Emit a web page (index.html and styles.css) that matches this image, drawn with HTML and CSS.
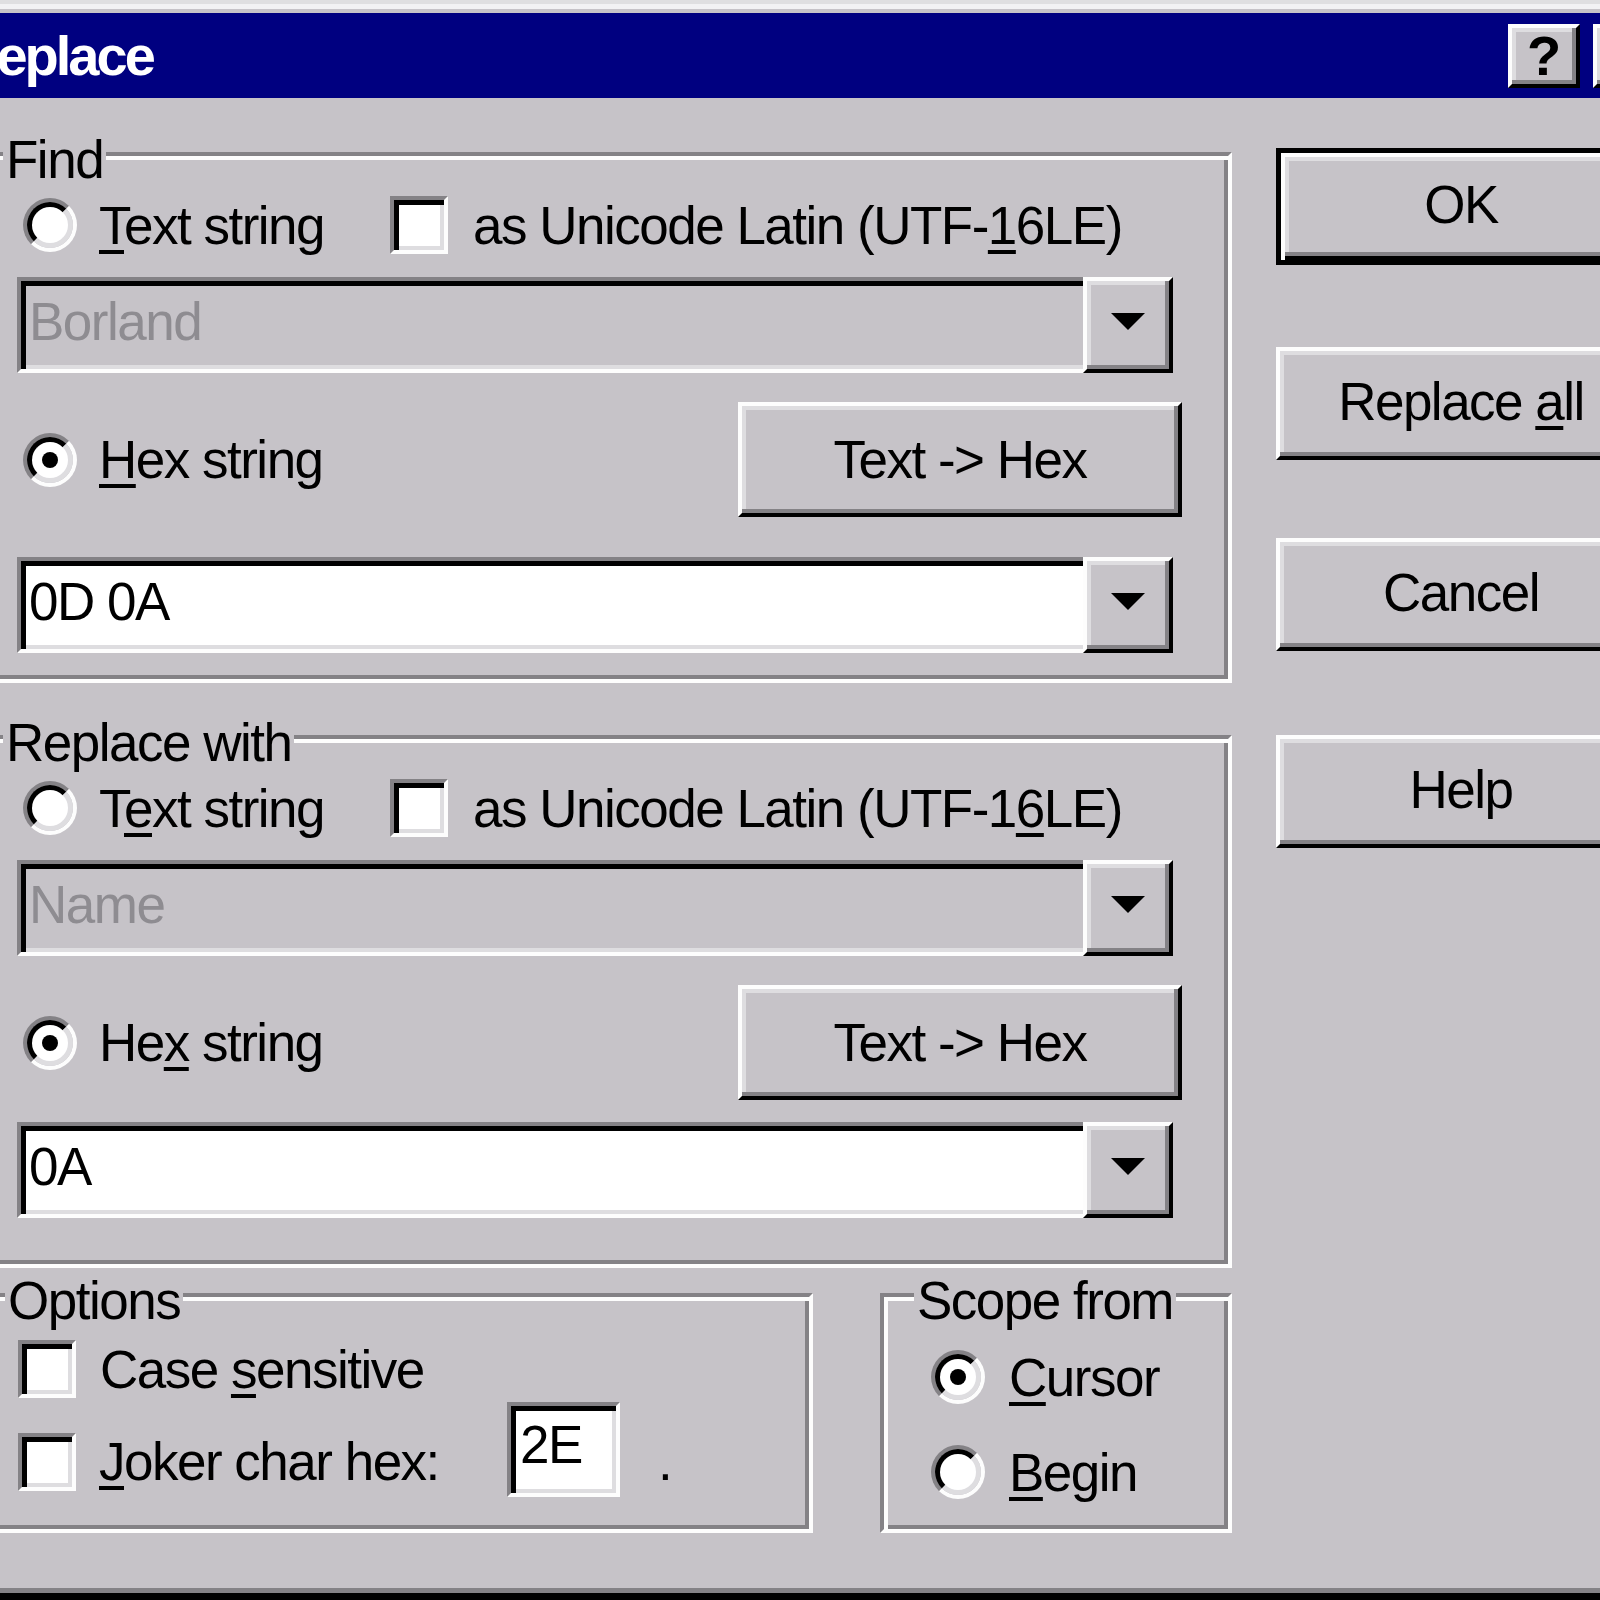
FILE: index.html
```html
<!DOCTYPE html>
<html>
<head>
<meta charset="utf-8">
<title>Replace</title>
<link rel="stylesheet" href="styles.css">
</head>
<body>
<div class="window">
  <div class="frame-top"></div>
  <div class="titlebar">
    <span class="title">Replace</span>
    <div class="caption-btns">
      <span class="cap-btn">?</span>
      <span class="cap-btn close"></span>
    </div>
  </div>
  <div class="client">
    <div class="left-col">
      <section class="group find">
        <div class="legend">Find</div>
        <div class="row">
          <span class="radio"><span class="radio-in"></span></span>
          <span class="lbl r-lbl"><u>T</u>ext string</span>
          <span class="check"></span>
          <span class="lbl c-lbl">as Unicode Latin (UTF-<u>1</u>6LE)</span>
        </div>
        <div class="combo">
          <div class="field disabled">Borland</div>
          <div class="drop"><svg width="34" height="17" viewBox="0 0 34 17"><polygon points="0,0 34,0 17,17" fill="#000"/></svg></div>
        </div>
        <div class="row hexrow">
          <span class="radio on"><span class="radio-in"></span></span>
          <span class="lbl r-lbl grow"><u>H</u>ex string</span>
          <span class="btn t2h"><span>Text -&gt; Hex</span></span>
        </div>
        <div class="combo combo-lg">
          <div class="field">0D 0A</div>
          <div class="drop"><svg width="34" height="17" viewBox="0 0 34 17"><polygon points="0,0 34,0 17,17" fill="#000"/></svg></div>
        </div>
      </section>

      <section class="group replace">
        <div class="legend">Replace with</div>
        <div class="row">
          <span class="radio"><span class="radio-in"></span></span>
          <span class="lbl r-lbl">T<u>e</u>xt string</span>
          <span class="check"></span>
          <span class="lbl c-lbl">as Unicode Latin (UTF-1<u>6</u>LE)</span>
        </div>
        <div class="combo">
          <div class="field disabled">Name</div>
          <div class="drop"><svg width="34" height="17" viewBox="0 0 34 17"><polygon points="0,0 34,0 17,17" fill="#000"/></svg></div>
        </div>
        <div class="row hexrow">
          <span class="radio on"><span class="radio-in"></span></span>
          <span class="lbl r-lbl grow">He<u>x</u> string</span>
          <span class="btn t2h"><span>Text -&gt; Hex</span></span>
        </div>
        <div class="combo">
          <div class="field">0A</div>
          <div class="drop"><svg width="34" height="17" viewBox="0 0 34 17"><polygon points="0,0 34,0 17,17" fill="#000"/></svg></div>
        </div>
      </section>

      <div class="bottom-row">
        <section class="group options">
          <div class="legend">Options</div>
          <div class="cs-row">
            <span class="check"></span>
            <span class="lbl cs-lbl">Case <u>s</u>ensitive</span>
          </div>
          <div class="jk-row">
            <span class="check"></span>
            <span class="lbl jk-lbl"><u>J</u>oker char hex:</span>
            <span class="edit">2E</span>
            <span class="lbl dot-lbl">.</span>
          </div>
        </section>
        <section class="group scope">
          <div class="legend">Scope from</div>
          <div class="s-row s-first">
            <span class="radio on"><span class="radio-in"></span></span>
            <span class="lbl s-lbl"><u>C</u>ursor</span>
          </div>
          <div class="s-row s-second">
            <span class="radio"><span class="radio-in"></span></span>
            <span class="lbl s-lbl"><u>B</u>egin</span>
          </div>
        </section>
      </div>
    </div>

    <div class="right-col">
      <span class="btn rbtn ok"><span>OK</span></span>
      <span class="btn rbtn b-all"><span>Replace <u>a</u>ll</span></span>
      <span class="btn rbtn b-cancel"><span>Cancel</span></span>
      <span class="btn rbtn b-help"><span>Help</span></span>
    </div>
  </div>
  <div class="frame-bottom"></div>
</div>
</body>
</html>
```

FILE: styles.css
```css
* { box-sizing: border-box; }
html, body { margin: 0; padding: 0; }
body {
  width: 1600px;
  height: 1600px;
  overflow: hidden;
  background: #c6c3c8;
  font-family: "Liberation Sans", Arial, sans-serif;
  font-size: 53px;
  letter-spacing: -1.5px;
  color: #000;
}
u {
  text-decoration: underline;
  text-decoration-thickness: 4px;
  text-underline-offset: 6px;
  text-decoration-skip-ink: none;
}
.window { width: 1665px; }

.frame-top {
  height: 13px;
  border-top: 4px solid #dfdfe1;
  border-bottom: 4px solid #c6c3c8;
  background: #f2f2f4;
}
.titlebar {
  height: 85px;
  background: #000080;
  display: flex;
  align-items: center;
  overflow: hidden;
}
.title {
  margin-left: -41px;
  color: #fff;
  font-weight: bold;
  font-size: 56px;
  letter-spacing: -3px;
  line-height: 85px;
  white-space: nowrap;
}
.caption-btns {
  margin-left: auto;
  display: flex;
  gap: 13px;
}
.cap-btn {
  width: 72px;
  height: 64px;
  background: #c6c3c8;
  border: 4px solid;
  border-color: #fdfdfd #000 #000 #fdfdfd;
  box-shadow: inset -4px -4px 0 #848286, inset 4px 4px 0 #dedde0;
  display: flex;
  align-items: center;
  justify-content: center;
  font-weight: bold;
  font-size: 56px;
  letter-spacing: 0;
  line-height: 56px;
}

.client {
  display: flex;
  align-items: flex-start;
  height: 1490px;
}
.left-col {
  margin-left: -20px;
  width: 1252px;
  flex-shrink: 0;
  display: flex;
  flex-direction: column;
}
.right-col {
  margin-left: 44px;
  width: 370px;
  flex-shrink: 0;
  display: flex;
  flex-direction: column;
}

.group {
  border: 4px solid;
  border-color: #848286 #fdfdfd #fdfdfd #848286;
  box-shadow: inset 4px 4px 0 #fdfdfd, inset -4px -4px 0 #848286;
  display: flex;
  flex-direction: column;
}
.find { margin-top: 54px; padding: 0 46px 26px 33px; }
.replace { margin-top: 52px; padding: 0 46px 46px 33px; }

.legend {
  align-self: flex-start;
  margin-top: -21px;
  margin-left: -14px;
  height: 50px;
  line-height: 50px;
  padding: 0 3px;
  background: #c6c3c8;
  white-space: nowrap;
}

.row {
  display: flex;
  align-items: center;
  height: 60px;
  margin-top: 10px;
  padding-left: 6px;
}
.hexrow { height: 115px; margin-top: 29px; }
.lbl { white-space: nowrap; }
.r-lbl { margin-left: 22px; width: 291px; }
.c-lbl { margin-left: 25px; }
.grow { flex: 1; }

.radio {
  width: 54px;
  height: 54px;
  flex-shrink: 0;
  border-radius: 50%;
  border: 4px solid;
  border-color: #848286 #fdfdfd #fdfdfd #848286;
  display: flex;
}
.radio-in {
  flex: 1;
  border-radius: 50%;
  border: 5px solid;
  border-color: #000 #dedde0 #dedde0 #000;
  background: #fff;
  display: flex;
  align-items: center;
  justify-content: center;
}
.on .radio-in::after {
  content: "";
  width: 16px;
  height: 16px;
  border-radius: 50%;
  background: #000;
}

.check {
  width: 58px;
  height: 58px;
  flex-shrink: 0;
  border: 4px solid;
  border-color: #848286 #fdfdfd #fdfdfd #848286;
  background: #fff;
  box-shadow: inset 5px 5px 0 #000, inset -4px -4px 0 #dedde0;
}

.combo {
  display: flex;
  width: 1156px;
  height: 96px;
  margin-top: 22px;
}
.combo-lg { margin-top: 40px; }
.field {
  flex: 1;
  border: 4px solid;
  border-right: 0;
  border-color: #848286 #fdfdfd #fdfdfd #848286;
  box-shadow: inset 5px 5px 0 #000, inset 0 -4px 0 #dedde0;
  background: #fff;
  padding: 0 0 6px 8px;
  line-height: 82px;
  white-space: nowrap;
  overflow: hidden;
}
.field.disabled { background: #c6c3c8; color: #8e8c91; }
.drop {
  width: 90px;
  flex-shrink: 0;
  border: 4px solid;
  border-color: #fdfdfd #000 #000 #fdfdfd;
  box-shadow: inset -4px -4px 0 #848286, inset 4px 4px 0 #dedde0;
  background: #c6c3c8;
  display: flex;
  align-items: center;
  justify-content: center;
  padding-bottom: 7px;
}
.drop svg { display: block; }

.btn {
  border: 4px solid;
  border-color: #fdfdfd #000 #000 #fdfdfd;
  box-shadow: inset -4px -4px 0 #848286, inset 4px 4px 0 #dedde0;
  background: #c6c3c8;
  display: flex;
  align-items: center;
  justify-content: center;
  white-space: nowrap;
  flex-shrink: 0;
}
.t2h { width: 444px; height: 115px; }

.bottom-row {
  display: flex;
  margin-top: 25px;
}
.options {
  width: 833px;
  height: 240px;
  padding: 0 0 0 33px;
}
.options .legend { margin-left: -12px; }
.scope {
  margin-left: 67px;
  width: 352px;
  height: 240px;
  padding: 0 0 0 47px;
}
.scope .legend { margin-left: -17px; }

.cs-row {
  display: flex;
  align-items: center;
  height: 58px;
  margin-top: 14px;
  padding-left: 1px;
}
.cs-lbl { margin-left: 24px; }
.jk-row {
  display: flex;
  align-items: center;
  margin-top: 4px;
  padding-left: 1px;
}
.jk-lbl { margin-left: 23px; width: 408px; }
.edit {
  display: block;
  width: 113px;
  height: 95px;
  margin-bottom: 24px;
  flex-shrink: 0;
  border: 4px solid;
  border-color: #848286 #fdfdfd #fdfdfd #848286;
  box-shadow: inset 5px 5px 0 #000, inset -4px -4px 0 #dedde0;
  background: #fff;
  padding-left: 9px;
  line-height: 77px;
}
.dot-lbl { margin-left: 38px; }

.s-row {
  display: flex;
  align-items: center;
  height: 60px;
}
.s-first { margin-top: 21px; }
.s-second { margin-top: 35px; }
.s-lbl { margin-left: 24px; }

.rbtn {
  width: 370px;
  height: 113px;
  padding-bottom: 4px;
}
.ok {
  margin-top: 50px;
  height: 117px;
  border: 5px solid #000;
  box-shadow: inset 4px 4px 0 #fdfdfd, inset -4px -4px 0 #000, inset -8px -8px 0 #848286, inset 8px 8px 0 #dedde0;
}
.b-all { margin-top: 82px; }
.b-cancel { margin-top: 78px; }
.b-help { margin-top: 84px; }

.frame-bottom {
  height: 12px;
  border-top: 5px solid #848286;
  background: #000;
}
```
